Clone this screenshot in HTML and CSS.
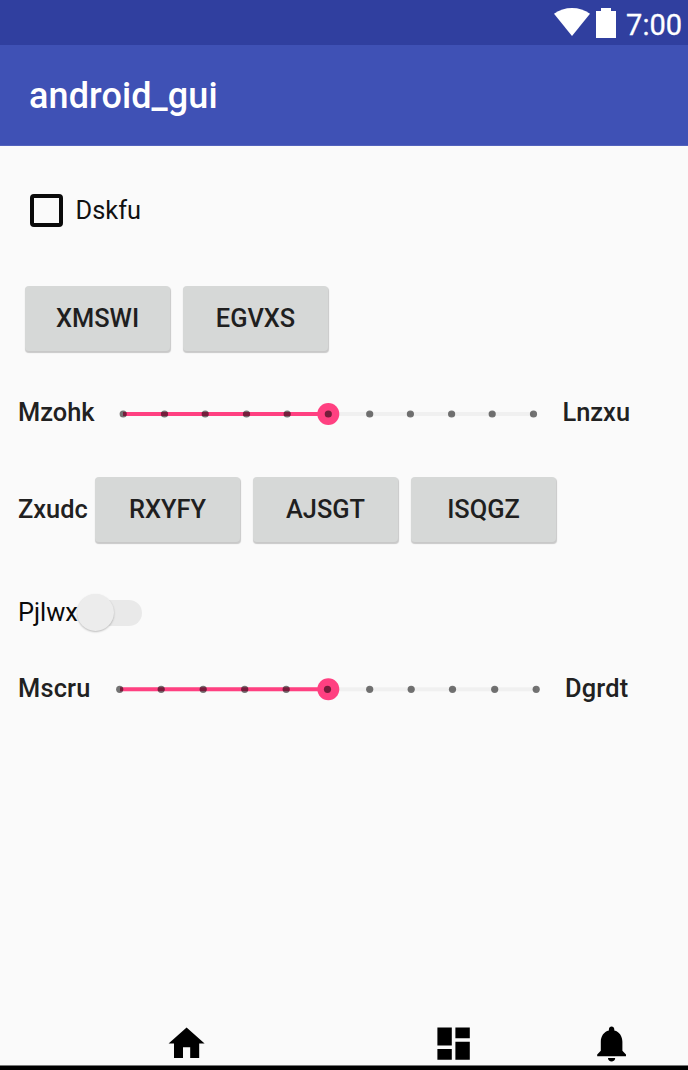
FILE: index.html
```html
<!DOCTYPE html>
<html lang="en">
<head>
<meta charset="utf-8">
<title>android_gui</title>
<link rel="stylesheet" href="styles.css">
</head>
<body>
<div class="screen">
  <header class="status">
    <svg class="wifi" width="36" height="28" viewBox="0 0 36 28"><path d="M0 5.8Q8 0 18 0T36 5.8L18 28Z"/></svg>
    <svg class="battery" width="20" height="30" viewBox="0 0 20 30"><path d="M5 0H15V3H20V30H0V3H5Z"/></svg>
    <span class="clock">7:00</span>
  </header>
  <div class="appbar"><h1 class="title">android_gui</h1></div>
  <main class="content">
    <label class="row check-row"><span class="checkbox"></span><span class="check-label">Dskfu</span></label>
    <div class="row buttons first-buttons">
      <button class="btn">XMSWI</button><button class="btn">EGVXS</button>
    </div>
    <div class="row slider-row">
      <span class="label slider-start">Mzohk</span>
      <svg class="slider slider-a" width="420" height="24" viewBox="0 0 420 24">
        <path class="track" d="M5 12H415"/><path class="fill" d="M5 12H210"/><circle class="thumb" cx="210.3" cy="12" r="11"/>
        <g class="ticks"><circle cx="5.2" cy="12" r="3.6"/><circle cx="46.5" cy="12" r="3.6"/><circle cx="87.2" cy="12" r="3.6"/><circle cx="128.5" cy="12" r="3.6"/><circle cx="169.2" cy="12" r="3.6"/><circle cx="210.3" cy="12" r="3.6"/><circle cx="251.7" cy="12" r="3.6"/><circle cx="292.4" cy="12" r="3.6"/><circle cx="333.6" cy="12" r="3.6"/><circle cx="374.2" cy="12" r="3.6"/><circle cx="415.5" cy="12" r="3.6"/></g>
      </svg>
      <span class="label">Lnzxu</span>
    </div>
    <div class="row button-row">
      <span class="label button-label">Zxudc</span>
      <div class="buttons"><button class="btn">RXYFY</button><button class="btn">AJSGT</button><button class="btn">ISQGZ</button></div>
    </div>
    <div class="row switch-row">
      <span class="switch-label">Pjlwx</span>
      <span class="switch"><span class="knob"></span></span>
    </div>
    <div class="row slider-row last-slider">
      <span class="label slider-start second">Mscru</span>
      <svg class="slider slider-b" width="427" height="24" viewBox="0 0 427 24">
        <path class="track" d="M5 12.3H421"/><path class="fill" d="M5 12.3H213"/><circle class="thumb" cx="213.3" cy="12.3" r="11"/>
        <g class="ticks"><circle cx="4.7" cy="12.3" r="3.6"/><circle cx="46.2" cy="12.3" r="3.6"/><circle cx="88.2" cy="12.3" r="3.6"/><circle cx="129.7" cy="12.3" r="3.6"/><circle cx="171.2" cy="12.3" r="3.6"/><circle cx="212.5" cy="12.3" r="3.6"/><circle cx="254.7" cy="12.3" r="3.6"/><circle cx="296.2" cy="12.3" r="3.6"/><circle cx="337.5" cy="12.3" r="3.6"/><circle cx="379.7" cy="12.3" r="3.6"/><circle cx="421.2" cy="12.3" r="3.6"/></g>
      </svg>
      <span class="label end-label">Dgrdt</span>
    </div>
  </main>
  <nav class="nav">
    <svg class="icon home" viewBox="0 0 24 24"><path d="M10 20v-6h4v6h5v-8h3L12 3 2 12h3v8z"/></svg>
    <svg class="icon dashboard" viewBox="0 0 24 24"><path d="M3 13h8V3H3v10zm0 8h8v-6H3v6zm10 0h8V11h-8v10zm0-18v6h8V3h-8z"/></svg>
    <svg class="icon bell" viewBox="0 0 24 24"><path d="M12 22c1.1 0 2-.9 2-2h-4c0 1.1.89 2 2 2zm6-6v-5c0-3.07-1.64-5.64-4.5-6.32V4c0-.83-.67-1.5-1.5-1.5s-1.5.67-1.5 1.5v.68C7.63 5.36 6 7.92 6 11v5l-2 2v1h16v-1l-2-2z"/></svg>
  </nav>
  <div class="edge"></div>
</div>
</body>
</html>
```

FILE: styles.css
```css
* { box-sizing: border-box; }
body { margin: 0; background: #fafafa; font-family: Roboto, sans-serif; font-size: 25.4px; line-height: 30px; color: #111; }
svg { display: block; flex: none; }
.screen { width: 688px; height: 1070px; display: flex; flex-direction: column; overflow: hidden; }
.status { height: 45px; flex: none; display: flex; align-items: flex-start; justify-content: flex-end; padding: 8px 6px 0 0; background: #303f9f; color: #fff; fill: #fff; }
.battery { margin: 0 10px 0 6px; }
.clock { padding-top: 1px; font-size: 29px; line-height: 33px; -webkit-text-stroke: .3px #fff; }
.appbar { height: 101px; flex: none; display: flex; align-items: center; padding: 2px 0 0 29px; background: #3f51b5; border-bottom: 1px solid #5262bc; }
.title { margin: 0; font-size: 36px; font-weight: 500; line-height: 42px; letter-spacing: .1px; color: #fff; }
.content { flex: 1; padding: 48px 18px 0; }
.row { display: flex; align-items: center; white-space: nowrap; }
.check-row { height: 33px; padding-left: 12px; gap: 12.5px; }
.check-label { padding-bottom: 2px; }
.checkbox { width: 33px; height: 33px; border: 4px solid #0a0a0a; border-radius: 4px; }
.buttons { display: flex; gap: 13px; }
.first-buttons { margin-top: 59px; padding-left: 7px; }
.btn { width: 145px; height: 65px; padding: 0 0 2px; border: 0; border-radius: 4px; background: #d6d8d7; box-shadow: .5px 1.5px 1px rgba(0, 0, 0, .2); color: #1f1f1f; font: 500 25.4px/30px Roboto, sans-serif; }
.label { color: #212121; font-weight: 500; padding-bottom: 2px; }
.slider-row { height: 30px; margin-top: 47px; }
.slider-start { width: 100px; }
.second { width: 97px; padding-bottom: 1px; letter-spacing: .2px; }
.end-label { padding-bottom: 1px; letter-spacing: .2px; }
.slider { margin-top: 2px; }
.slider-a { margin-right: 24.5px; }
.slider-b { margin-right: 23px; }
.track { stroke: #f0f0f0; stroke-width: 4; }
.fill { stroke: #ff4081; stroke-width: 4; }
.thumb { fill: #ff4081; }
.ticks { fill: #000; fill-opacity: .54; }
.button-row { margin-top: 49px; }
.button-label { width: 77px; padding-bottom: 2px; }
.switch-row { height: 37px; margin-top: 52px; }
.switch-label { width: 59px; padding-bottom: 1px; color: #0a0a0a; }
.switch { width: 65px; height: 26px; display: flex; align-items: center; border-radius: 13px; background: #e9e9e9; }
.knob { width: 37px; height: 37px; flex: none; border-radius: 50%; background: #ececec; box-shadow: 0 1px 2px rgba(0, 0, 0, .25); }
.last-slider { margin-top: 42px; }
.nav { height: 43px; flex: none; display: flex; }
.icon { width: 43.2px; height: 43.2px; }
.home { margin-left: 165.4px; }
.dashboard { margin-left: 223.2px; }
.bell { margin-left: 115px; }
.edge { height: 5px; flex: none; background: #000; border-top: 1px solid #777; }
```
